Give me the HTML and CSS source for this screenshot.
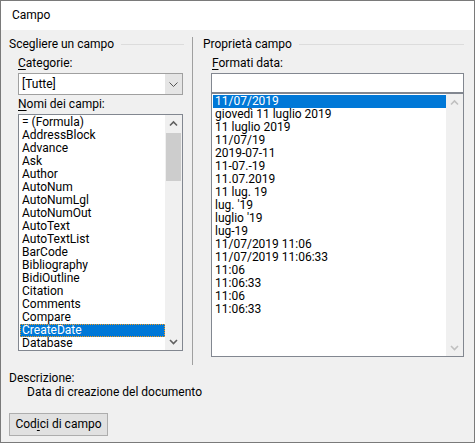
FILE: index.html
```html
<!DOCTYPE html>
<html lang="it">
<head>
<meta charset="utf-8">
<title>Campo</title>
<link rel="stylesheet" href="styles.css">
</head>
<body>
<div class="window">
  <div class="titlebar">Campo</div>
  <div class="client">
    <div class="panes">
      <section class="group group-left">
        <div class="group-head"><span>Scegliere un campo</span><i class="rule"></i></div>
        <div class="group-body">
          <div class="label"><u>C</u>ategorie:</div>
          <div class="combo">
            <span class="combo-value">[Tutte]</span>
            <span class="combo-btn">
              <svg width="17" height="20" viewBox="0 0 17 20"><polyline points="4.5,8.5 8.5,12.5 12.5,8.5" fill="none" stroke="#555" stroke-width="1"/></svg>
            </span>
          </div>
          <div class="label label-tight"><u>N</u>omi dei campi:</div>
          <div class="listbox list-fields">
            <ul class="items">
              <li>= (Formula)</li>
              <li>AddressBlock</li>
              <li>Advance</li>
              <li>Ask</li>
              <li>Author</li>
              <li>AutoNum</li>
              <li>AutoNumLgl</li>
              <li>AutoNumOut</li>
              <li>AutoText</li>
              <li>AutoTextList</li>
              <li>BarCode</li>
              <li>Bibliography</li>
              <li>BidiOutline</li>
              <li>Citation</li>
              <li>Comments</li>
              <li>Compare</li>
              <li class="selected focused">CreateDate</li>
              <li>Database</li>
            </ul>
            <div class="scrollbar">
              <span class="sb-btn">
                <svg width="17" height="17" viewBox="0 0 17 17"><polyline points="5,10.5 8.5,7 12,10.5" fill="none" stroke="#606060" stroke-width="1.6"/></svg>
              </span>
              <div class="sb-track"><span class="sb-thumb"></span></div>
              <span class="sb-btn">
                <svg width="17" height="17" viewBox="0 0 17 17"><polyline points="5,7 8.5,10.5 12,7" fill="none" stroke="#606060" stroke-width="1.6"/></svg>
              </span>
            </div>
          </div>
        </div>
      </section>

      <div class="separator"></div>

      <section class="group group-right">
        <div class="group-head"><span>Proprietà campo</span><i class="rule"></i></div>
        <div class="group-body">
          <div class="label label-inset"><u>F</u>ormati data:</div>
          <div class="textbox"></div>
          <div class="listbox list-formats">
            <ul class="items">
              <li class="selected">11/07/2019</li>
              <li>giovedì 11 luglio 2019</li>
              <li>11 luglio 2019</li>
              <li>11/07/19</li>
              <li>2019-07-11</li>
              <li>11-07.-19</li>
              <li>11.07.2019</li>
              <li>11 lug. 19</li>
              <li>lug. '19</li>
              <li>luglio '19</li>
              <li>lug-19</li>
              <li>11/07/2019 11:06</li>
              <li>11/07/2019 11:06:33</li>
              <li>11:06</li>
              <li>11:06:33</li>
              <li>11:06</li>
              <li>11:06:33</li>
            </ul>
            <div class="scrollbar scrollbar-disabled">
              <span class="sb-btn">
                <svg width="17" height="17" viewBox="0 0 17 17"><polyline points="5,10.5 8.5,7 12,10.5" fill="none" stroke="#c0c0c0" stroke-width="1.6"/></svg>
              </span>
              <div class="sb-track"></div>
              <span class="sb-btn">
                <svg width="17" height="17" viewBox="0 0 17 17"><polyline points="5,7 8.5,10.5 12,7" fill="none" stroke="#c0c0c0" stroke-width="1.6"/></svg>
              </span>
            </div>
          </div>
        </div>
      </section>
    </div>

    <div class="description">
      <div class="desc-title">Descrizione:</div>
      <div class="desc-text">Data di creazione del documento</div>
    </div>

    <button class="btn" type="button">Cod<u>i</u>ci di campo</button>
  </div>
</div>
</body>
</html>
```

FILE: styles.css
```css
* {
  box-sizing: border-box;
  margin: 0;
  padding: 0;
}

body {
  margin: 0;
  font-family: Roboto, "Noto Sans", sans-serif;
  font-size: 12px;
  color: #000;
  background: #f0f0f0;
}

u {
  text-decoration: underline;
  text-underline-offset: 2px;
}

.window {
  width: 475px;
  height: 443px;
  border: 1px solid #7a7a7a;
  background: #f0f0f0;
  display: flex;
  flex-direction: column;
}

.titlebar {
  flex: none;
  height: 29px;
  line-height: 29px;
  padding-left: 11px;
  background: #fff;
}

.client {
  flex: 1;
  padding: 7px 0 0 8px;
}

/* two group columns split by a vertical rule */
.panes {
  display: flex;
  height: 328px;
}

.group-left {
  width: 175px;
}

.separator {
  width: 1px;
  margin-left: 8px;
  background: #a0a0a0;
}

.group-right {
  width: 261px;
  margin-left: 10px;
}

.group-head {
  display: flex;
  align-items: center;
  height: 14px;
  line-height: 14px;
  white-space: nowrap;
}

.group-head .rule {
  flex: 1;
  height: 1px;
  margin-left: 7px;
  background: #dcdcdc;
}

.group-body {
  padding-left: 9px;
}

.group-right .group-body {
  padding-left: 8px;
}

.label {
  line-height: 14px;
  margin-top: 5px;
  white-space: nowrap;
}

.label-tight {
  margin-top: 2px;
}

.label-inset {
  padding-left: 1px;
}

/* drop-down combo */
.combo {
  display: flex;
  width: 165px;
  height: 22px;
  margin-top: 3px;
  border: 1px solid #a0a0a0;
  background: #fff;
}

.combo-value {
  flex: 1;
  line-height: 20px;
  padding-left: 3px;
}

.combo-btn {
  width: 17px;
  background: #e5e5e5;
  display: flex;
}

/* list boxes */
.listbox {
  display: flex;
  border: 1px solid #828790;
  background: #fff;
}

.list-fields {
  width: 165px;
  height: 237px;
  margin-top: 3px;
}

.textbox {
  width: 253px;
  height: 20px;
  margin-top: 3px;
  border: 1px solid #828790;
  background: #fff;
}

.list-formats {
  width: 253px;
  height: 264px;
}

.items {
  flex: 1;
  list-style: none;
  padding-top: 1px;
  min-width: 0;
}

.items li {
  height: 13px;
  line-height: 13px;
  margin-left: 1px;
  padding-left: 2px;
  white-space: nowrap;
}

.items li.selected {
  background: #0078d7;
  color: #fff;
}

.items li.focused {
  outline: 1px dotted #f39a1e;
  outline-offset: -1px;
}

/* vertical scroll bar */
.scrollbar {
  flex: none;
  width: 17px;
  display: flex;
  flex-direction: column;
  background: #f0f0f0;
}

.sb-btn {
  flex: none;
  height: 17px;
  display: flex;
}

.sb-track {
  flex: 1;
  padding: 1px 1px 0 1px;
}

.sb-thumb {
  display: block;
  height: 48px;
  background: #cdcdcd;
}

/* description block */
.desc-title {
  margin-top: 6px;
  line-height: 14px;
}

.desc-text {
  padding-left: 18px;
  line-height: 14px;
}

.btn {
  display: block;
  width: 99px;
  height: 23px;
  margin-top: 14px;
  border: 1px solid #adadad;
  background: #e1e1e1;
  font: inherit;
  color: #000;
  line-height: 21px;
  text-align: center;
}
```
